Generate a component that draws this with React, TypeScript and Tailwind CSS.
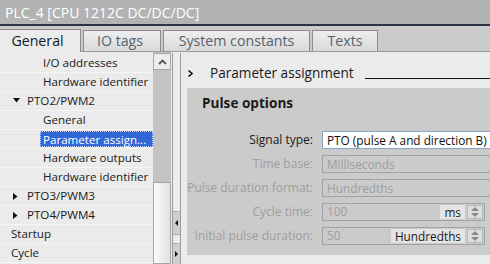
import React from "react";

const font = { fontFamily: '"Open Sans", "Noto Sans", sans-serif' };

function TreeRow({
  indent,
  text,
  arrow,
  selected,
}: {
  indent: number;
  text: string;
  arrow?: "down" | "right";
  selected?: boolean;
}) {
  return (
    <div className="relative h-[19px] border-b border-[#f6f6f6] flex items-center shrink-0">
      {arrow && (
        <span className="absolute left-[13px] top-[6px]">
          {arrow === "down" ? (
            <svg width="7" height="5" viewBox="0 0 7 5">
              <path d="M0 0 L7 0 L3.5 4.5 Z" fill="#111" />
            </svg>
          ) : (
            <svg width="5" height="7" viewBox="0 0 5 7">
              <path d="M0 0 L4.5 3.5 L0 7 Z" fill="#111" />
            </svg>
          )}
        </span>
      )}
      {selected ? (
        <div
          className="absolute top-[1px] h-[16px] right-0 bg-[#3168d5] text-white text-[11.6px] leading-[15px] pl-[2px] border border-dotted border-[#c8d6ff] whitespace-nowrap"
          style={{ left: indent - 3 }}
        >
          {text}
        </div>
      ) : (
        <span
          className="absolute text-[11.6px] leading-[16px] text-[#1a1a1a] whitespace-nowrap"
          style={{ left: indent }}
        >
          {text}
        </span>
      )}
    </div>
  );
}

function Spinner() {
  return (
    <div className="w-[16px] h-[14px] bg-[#dedede] border border-[#b8b8b8] flex flex-col items-center justify-center gap-[2px] ml-[2px] shrink-0">
      <svg width="8" height="4" viewBox="0 0 8 4">
        <path d="M0 4 L4 0 L8 4 Z" fill="#8a8a8a" />
      </svg>
      <svg width="8" height="4" viewBox="0 0 8 4">
        <path d="M0 0 L4 4 L8 0 Z" fill="#8a8a8a" />
      </svg>
    </div>
  );
}

function FormRow({
  label,
  enabled,
  children,
}: {
  label: string;
  enabled?: boolean;
  children: React.ReactNode;
}) {
  return (
    <div className="flex items-center h-[18px]">
      <div
        className={`w-[126px] shrink-0 text-right text-[12px] whitespace-nowrap ${
          enabled ? "text-[#1a1a1a]" : "text-[#9e9e9e]"
        }`}
      >
        {label}
      </div>
      <div className="ml-[9px] flex-1 h-full min-w-0">{children}</div>
    </div>
  );
}

export default function App() {
  return (
    <div
      className="w-[490px] h-[264px] overflow-hidden bg-[#ebebeb] flex flex-col"
      style={font}
    >
      {/* Title bar */}
      <div className="h-[24px] bg-[#b3b3b3] text-white text-[14px] pl-[5px] flex items-center shrink-0 whitespace-nowrap">
        PLC_4 [CPU 1212C DC/DC/DC]
      </div>
      <div className="h-[2px] bg-[#2c3347] shrink-0" />
      {/* Tabs */}
      <div className="h-[26px] bg-[#cbcbcb] flex items-end gap-[2px] shrink-0 border-b border-[#9a9a9a] relative">
        <div className="w-[81px] bg-[#ebebeb] border-r border-t border-[#8c8c8c] text-[14.2px] text-[#0f1a2c] flex items-center justify-center relative top-[1px] h-[23px] pr-[5px]">
          General
        </div>
        <div className="w-[78px] h-[21px] bg-gradient-to-b from-[#eeeeee] to-[#d9d9d9] border border-b-0 border-[#8c8c8c] text-[14.2px] text-[#566272] flex items-center justify-center pr-[4px]">
          IO tags
        </div>
        <div className="w-[147px] h-[21px] bg-gradient-to-b from-[#eeeeee] to-[#d9d9d9] border border-b-0 border-[#8c8c8c] text-[14.2px] text-[#566272] flex items-center justify-center whitespace-nowrap">
          System constants
        </div>
        <div className="w-[66px] h-[21px] bg-gradient-to-b from-[#eeeeee] to-[#d9d9d9] border border-b-0 border-[#8c8c8c] text-[14.2px] text-[#566272] flex items-center justify-center">
          Texts
        </div>
      </div>
      {/* Content */}
      <div className="flex flex-1 min-h-0">
        {/* Tree */}
        <div className="w-[153px] shrink-0 flex flex-col overflow-hidden">
          <div className="h-[2px] shrink-0" />
          <TreeRow indent={43} text="I/O addresses" />
          <TreeRow indent={43} text="Hardware identifier" />
          <TreeRow indent={27} text="PTO2/PWM2" arrow="down" />
          <TreeRow indent={43} text="General" />
          <TreeRow indent={43} text="Parameter assign..." selected />
          <TreeRow indent={43} text="Hardware outputs" />
          <TreeRow indent={43} text="Hardware identifier" />
          <TreeRow indent={27} text="PTO3/PWM3" arrow="right" />
          <TreeRow indent={27} text="PTO4/PWM4" arrow="right" />
          <TreeRow indent={11} text="Startup" />
          <TreeRow indent={11} text="Cycle" />
        </div>
        {/* Scrollbar */}
        <div className="w-[18px] shrink-0 bg-[#c3c3c3] flex flex-col pt-[1px]">
          <div className="h-[17px] bg-[#ececec] border border-[#a6a6a6] flex items-center justify-center">
            <svg width="9" height="6" viewBox="0 0 9 6">
              <path d="M1 5 L4.5 1.5 L8 5" stroke="#555" strokeWidth="1.8" fill="none" />
            </svg>
          </div>
          <div className="h-[112px]" />
          <div className="flex-1 bg-gradient-to-r from-[#fafafa] to-[#e2e2e2] border border-[#a6a6a6]" />
        </div>
        {/* Splitter */}
        <div className="w-[9px] shrink-0 flex flex-col pt-[1px] ml-[1px]">
          <div className="flex-1 border-x border-[#9c9c9c] bg-[#ececec] flex flex-col">
            <div className="h-[158px]" />
            <div className="h-[24px] bg-[#cfcfcf] border-y border-[#a9a9a9] flex items-center justify-center">
              <svg width="3" height="6" viewBox="0 0 3 6">
                <path d="M3 0 L0 3 L3 6 Z" fill="#111" />
              </svg>
            </div>
            <div className="h-[8px]" />
            <div className="flex-1 bg-[#cfcfcf] border-t border-[#a9a9a9] flex items-center justify-center">
              <svg width="3" height="6" viewBox="0 0 3 6">
                <path d="M0 0 L3 3 L0 6 Z" fill="#111" />
              </svg>
            </div>
          </div>
        </div>
        {/* Right pane */}
        <div className="flex-1 min-w-0 flex flex-col overflow-hidden">
          <div className="h-[36px] shrink-0 flex items-center pl-[7px] pt-[6px]">
            <svg width="5" height="7" viewBox="0 0 5 7" className="mr-[17px] shrink-0">
              <path d="M0.5 0.5 L4 3.5 L0.5 6.5" stroke="#111" strokeWidth="1.5" fill="none" />
            </svg>
            <span className="text-[13.6px] text-[#1a1a1a] whitespace-nowrap">
              Parameter assignment
            </span>
            <div className="flex-1 h-[1px] bg-[#111] ml-[11px] mt-[10px]" />
          </div>
          <div className="ml-[6px] h-[167px] bg-[#cbcbcb] flex flex-col">
            <div className="h-[30px] flex items-center pl-[15px] text-[13.6px] font-bold text-[#1a1a1a]">
              Pulse options
            </div>
            <div className="flex flex-col gap-[6px] pt-[13px]">
              <FormRow label="Signal type:" enabled>
                <div className="h-full w-[200px] bg-white border border-[#8aa4c8] text-[11.8px] text-[#111] pl-[4px] leading-[16px] whitespace-nowrap">
                  PTO (pulse A and direction B)
                </div>
              </FormRow>
              <FormRow label="Time base:">
                <div className="h-full w-[200px] border border-[#a2a2a2] text-[11.8px] text-[#9e9e9e] pl-[4px] leading-[16px]">
                  Milliseconds
                </div>
              </FormRow>
              <FormRow label="Pulse duration format:">
                <div className="h-full w-[200px] border border-[#a2a2a2] text-[11.8px] text-[#9e9e9e] pl-[4px] leading-[16px]">
                  Hundredths
                </div>
              </FormRow>
              <FormRow label="Cycle time:">
                <div className="h-full w-[163px] border border-[#a2a2a2] text-[11.8px] flex items-center pl-[4px] pr-[1px]">
                  <span className="text-[#9e9e9e] flex-1">100</span>
                  <span className="bg-[#e4e4e4] text-[#1a1a1a] px-[4px] h-[14px] leading-[15px]">ms</span>
                  <Spinner />
                </div>
              </FormRow>
              <FormRow label="Initial pulse duration:">
                <div className="h-full w-[163px] border border-[#a2a2a2] text-[11.8px] flex items-center pl-[4px] pr-[1px]">
                  <span className="text-[#9e9e9e] flex-1">50</span>
                  <span className="bg-[#e4e4e4] text-[#1a1a1a] px-[4px] h-[14px] leading-[15px]">Hundredths</span>
                  <Spinner />
                </div>
              </FormRow>
            </div>
          </div>
        </div>
      </div>
    </div>
  );
}
